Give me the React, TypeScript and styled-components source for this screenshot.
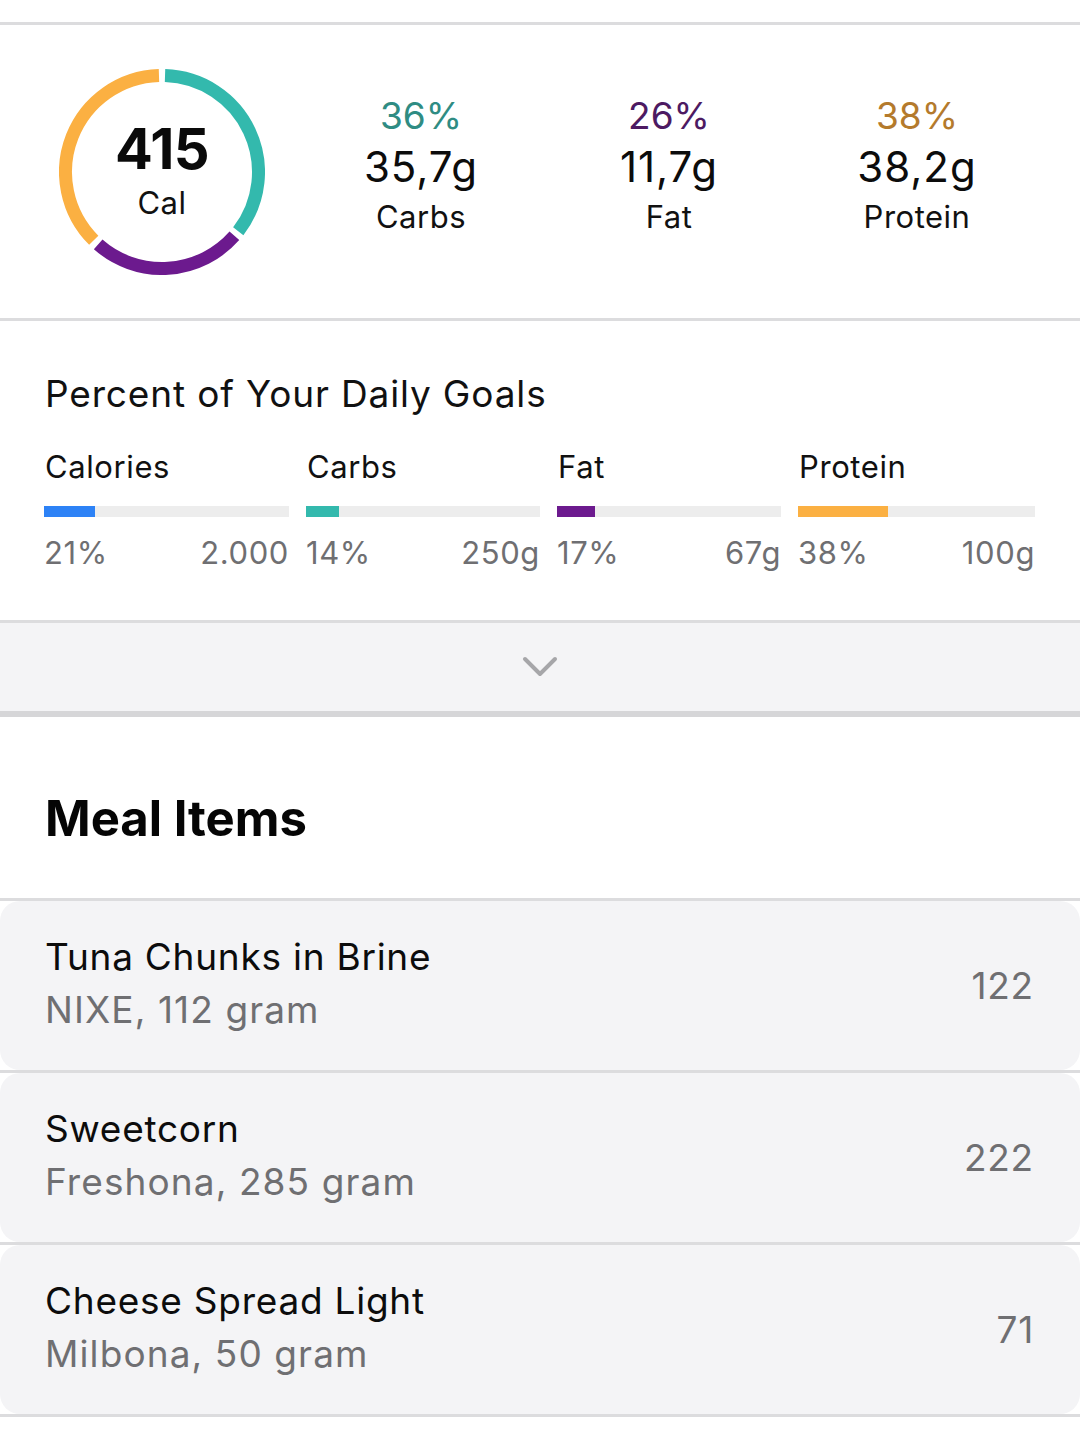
import React from "react";
import styled, { createGlobalStyle } from "styled-components";

const GlobalStyle = createGlobalStyle`
  body {
    margin: 0;
    background: #ffffff;
    font-family: Inter, "Noto Sans", "Liberation Sans", sans-serif;
    color: #111111;
  }
`;

const LINE = "#dcdcde";
const PANEL = "#f4f4f6";
const GREY_TEXT = "#6f6f72";

const macros = [
  { key: "carbs", label: "Carbs", pct: 36, grams: "35,7g", ring: "#33b9ad", text: "#2f8c83" },
  { key: "fat", label: "Fat", pct: 26, grams: "11,7g", ring: "#6c1a8e", text: "#4d1a62" },
  { key: "protein", label: "Protein", pct: 38, grams: "38,2g", ring: "#fbb042", text: "#b47a2c" },
];

const goals = [
  { label: "Calories", pct: 21, goal: "2.000", color: "#2d82f6", width: 245 },
  { label: "Carbs", pct: 14, goal: "250g", color: "#33b9ad", width: 234 },
  { label: "Fat", pct: 17, goal: "67g", color: "#6c1a8e", width: 224 },
  { label: "Protein", pct: 38, goal: "100g", color: "#fbb042", width: 237 },
];

const mealItems = [
  { name: "Tuna Chunks in Brine", detail: "NIXE, 112 gram", cal: 122 },
  { name: "Sweetcorn", detail: "Freshona, 285 gram", cal: 222 },
  { name: "Cheese Spread Light", detail: "Milbona, 50 gram", cal: 71 },
];

const Page = styled.div`
  width: 1080px;
`;

const TopGap = styled.div`
  height: 22px;
  border-bottom: 3px solid ${LINE};
`;

const MacroSection = styled.section`
  display: flex;
  align-items: center;
  height: 293px;
  padding-left: 59px;
  border-bottom: 3px solid ${LINE};
`;

const RingWrap = styled.div`
  display: grid;
  width: 206px;
  height: 206px;
  margin-right: 32px;

  & > * {
    grid-area: 1 / 1;
  }
`;

const RingLabel = styled.div`
  display: flex;
  flex-direction: column;
  align-items: center;
  justify-content: center;
  padding-bottom: 2px;
`;

const RingValue = styled.div`
  font-size: 56px;
  font-weight: 700;
  line-height: 60px;
  color: #0a0a0a;
  letter-spacing: -0.5px;
`;

const RingUnit = styled.div`
  font-size: 31px;
  line-height: 40px;
  margin-top: 4px;
  letter-spacing: 0.5px;
`;

const MacroCol = styled.div`
  width: 248px;
  display: flex;
  flex-direction: column;
  align-items: center;
  padding-bottom: 12px;
`;

const MacroPct = styled.div<{ $color: string }>`
  font-size: 37px;
  line-height: 50px;
  color: ${(p) => p.$color};
`;

const MacroGrams = styled.div`
  font-size: 42px;
  line-height: 52px;
  letter-spacing: 1px;
  color: #0c0c0c;
`;

const MacroLabel = styled.div`
  font-size: 31px;
  line-height: 48px;
  letter-spacing: 0.5px;
  color: #111111;
`;

const GoalsSection = styled.section`
  padding: 51px 0 47px 44px;
  border-bottom: 3px solid ${LINE};
`;

const GoalsTitle = styled.h2`
  margin: 0 0 31px 1px;
  font-size: 37px;
  font-weight: 400;
  line-height: 44px;
  letter-spacing: 0.85px;
  color: #111111;
`;

const GoalsGrid = styled.div`
  display: flex;
  gap: 17px;
`;

const GoalCol = styled.div<{ $width: number }>`
  width: ${(p) => p.$width}px;
  display: flex;
  flex-direction: column;
`;

const GoalLabel = styled.div`
  font-size: 31px;
  line-height: 40px;
  margin-left: 1px;
  letter-spacing: 0.6px;
  color: #111111;
`;

const Track = styled.div`
  height: 11px;
  margin-top: 19px;
  background: #ededed;
`;

const Fill = styled.div<{ $color: string }>`
  height: 100%;
  background: ${(p) => p.$color};
`;

const GoalValues = styled.div`
  display: flex;
  justify-content: space-between;
  margin-top: 16px;
  font-size: 31px;
  line-height: 40px;
  letter-spacing: 0.6px;
  color: ${GREY_TEXT};
`;

const ExpandBar = styled.div`
  height: 88px;
  display: flex;
  align-items: center;
  justify-content: center;
  background: ${PANEL};
  border-bottom: 6px solid #d6d6d8;
`;

const MealHeader = styled.div`
  padding: 72px 0 49px 45px;
  border-bottom: 3px solid ${LINE};
`;

const MealTitle = styled.h1`
  margin: 0;
  font-size: 49px;
  font-weight: 700;
  line-height: 60px;
  color: #050505;
`;

const MealRow = styled.div`
  border-bottom: 3px solid ${LINE};
`;

const MealCard = styled.div`
  height: 169px;
  display: flex;
  align-items: center;
  justify-content: space-between;
  padding: 0 46px 0 45px;
  border-radius: 20px;
  background: ${PANEL};
`;

const MealText = styled.div`
  display: flex;
  flex-direction: column;
  padding-bottom: 6px;
`;

const MealName = styled.div`
  font-size: 37px;
  line-height: 53px;
  letter-spacing: 0.75px;
  color: #0c0c0c;
`;

const MealDetail = styled.div`
  font-size: 37px;
  line-height: 53px;
  letter-spacing: 1.1px;
  color: ${GREY_TEXT};
`;

const MealCal = styled.div`
  font-size: 37px;
  line-height: 53px;
  letter-spacing: 0.8px;
  color: ${GREY_TEXT};
`;

// arc path between two angles (degrees, clockwise from 12 o'clock)
const arc = (cx: number, cy: number, r: number, from: number, to: number) => {
  const pt = (a: number) => {
    const rad = (a * Math.PI) / 180;
    return [cx + r * Math.sin(rad), cy - r * Math.cos(rad)];
  };
  const [x1, y1] = pt(from);
  const [x2, y2] = pt(to);
  const large = to - from > 180 ? 1 : 0;
  return `M ${x1} ${y1} A ${r} ${r} 0 ${large} 1 ${x2} ${y2}`;
};

const CalorieRing = () => {
  const gap = 1.8;
  let start = 0;
  return (
    <RingWrap>
      <svg width="206" height="206" viewBox="0 0 206 206">
        {macros.map((m) => {
          const end = start + (m.pct / 100) * 360;
          const d = arc(103, 103, 96.5, start + gap, end - gap);
          start = end;
          return <path key={m.key} d={d} fill="none" stroke={m.ring} strokeWidth={13} />;
        })}
      </svg>
      <RingLabel>
        <RingValue>415</RingValue>
        <RingUnit>Cal</RingUnit>
      </RingLabel>
    </RingWrap>
  );
};

const Chevron = () => (
  <svg width="36" height="24" viewBox="0 0 36 24">
    <polyline
      points="3,4 18,19 33,4"
      fill="none"
      stroke="#a6a6a9"
      strokeWidth="4"
      strokeLinecap="round"
      strokeLinejoin="round"
    />
  </svg>
);

const App = () => {
  return (
    <Page>
      <GlobalStyle />
      <TopGap />
      <MacroSection>
        <CalorieRing />
        {macros.map((m) => (
          <MacroCol key={m.key}>
            <MacroPct $color={m.text}>{m.pct}%</MacroPct>
            <MacroGrams>{m.grams}</MacroGrams>
            <MacroLabel>{m.label}</MacroLabel>
          </MacroCol>
        ))}
      </MacroSection>

      <GoalsSection>
        <GoalsTitle>Percent of Your Daily Goals</GoalsTitle>
        <GoalsGrid>
          {goals.map((g) => (
            <GoalCol key={g.label} $width={g.width}>
              <GoalLabel>{g.label}</GoalLabel>
              <Track>
                <Fill $color={g.color} style={{ width: `${g.pct}%` }} />
              </Track>
              <GoalValues>
                <span>{g.pct}%</span>
                <span>{g.goal}</span>
              </GoalValues>
            </GoalCol>
          ))}
        </GoalsGrid>
      </GoalsSection>

      <ExpandBar>
        <Chevron />
      </ExpandBar>

      <MealHeader>
        <MealTitle>Meal Items</MealTitle>
      </MealHeader>

      {mealItems.map((item) => (
        <MealRow key={item.name}>
          <MealCard>
            <MealText>
              <MealName>{item.name}</MealName>
              <MealDetail>{item.detail}</MealDetail>
            </MealText>
            <MealCal>{item.cal}</MealCal>
          </MealCard>
        </MealRow>
      ))}
    </Page>
  );
};

export default App;
